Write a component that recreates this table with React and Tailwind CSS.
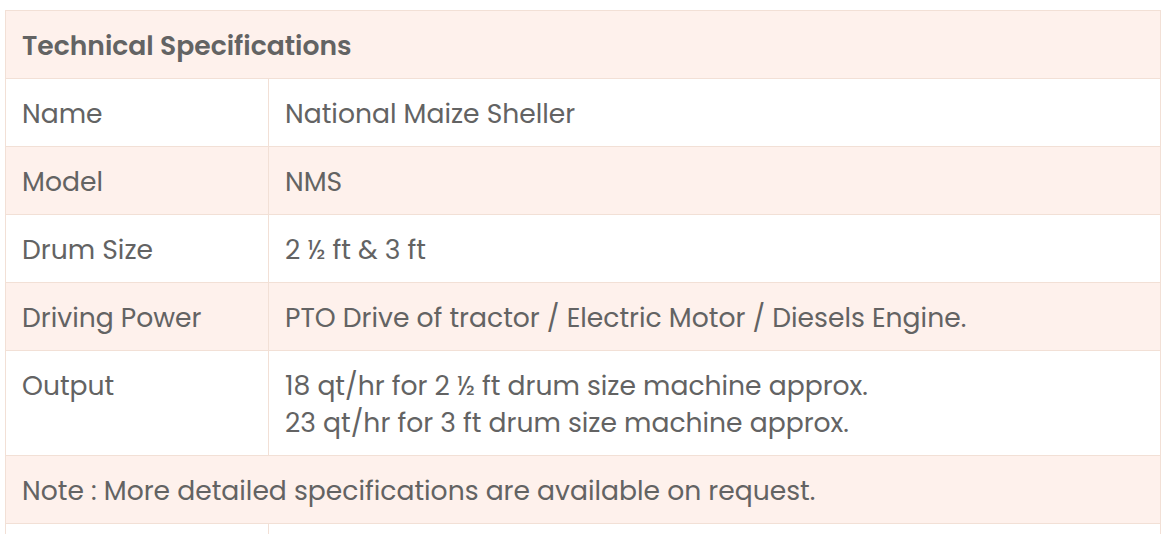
export default function App() {
  const rows = [
    ["Name", "National Maize Sheller"],
    ["Model", "NMS"],
    ["Drum Size", "2 ½ ft & 3 ft"],
    ["Driving Power", "PTO Drive of tractor / Electric Motor / Diesels Engine."],
    ["Output", ["18 qt/hr for 2 ½ ft drum size machine approx.", "23 qt/hr for 3 ft drum size machine approx."]],
  ]

  return (
    <div className="min-h-screen bg-white pl-[5px] pt-[10px] font-['Poppins','Inter',sans-serif] text-[#636363]">
      <table className="w-[1156px] border-collapse text-[26.6px] leading-[37px]">
        <tbody>
          <tr className="bg-[#fef1ec]">
            <th colSpan={2} className="border border-[#f2e0d6] px-4 pt-4 pb-[14px] text-left font-semibold">
              Technical Specifications
            </th>
          </tr>
          {rows.map(([label, value], i) => (
            <tr key={label} className={i % 2 === 1 ? "bg-[#fef1ec]" : "bg-white"}>
              <td className="w-[263px] border border-[#f2e0d6] px-4 pt-4 pb-[14px] align-top">{label}</td>
              <td className="border border-[#f2e0d6] px-4 pt-4 pb-[14px] align-top">
                {Array.isArray(value) ? value.map((v) => <div key={v}>{v}</div>) : value}
              </td>
            </tr>
          ))}
          <tr className="bg-[#fef1ec]">
            <td colSpan={2} className="border border-[#f2e0d6] px-4 pt-4 pb-[14px]">
              Note : More detailed specifications are available on request.
            </td>
          </tr>
          <tr className="bg-white">
            <td className="border border-[#f2e0d6] px-4 pt-4 pb-[14px]">&nbsp;</td>
            <td className="border border-[#f2e0d6] px-4 pt-4 pb-[14px]">&nbsp;</td>
          </tr>
        </tbody>
      </table>
    </div>
  )
}
